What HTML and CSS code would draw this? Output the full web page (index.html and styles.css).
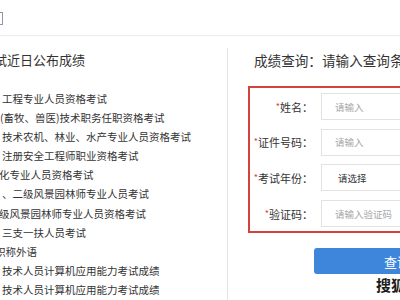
FILE: index.html
```html
<!DOCTYPE html>
<html lang="zh-CN">

<head>
    <meta http-equiv="Content-Type" content="text/html; charset=UTF-8" />
    <title>成绩查询</title>
    <link rel="stylesheet" href="styles.css">
</head>

<body>
    <div class="topBar">
        <span class="topIcon"></span>
    </div>

    <div class="main">
        <div class="newsColumn">
            <div class="sectionTitle cutTitle">试近日公布成绩</div>
            <ul class="newsList">
                <li>工程专业人员资格考试</li>
                <li class="cutLeft">(畜牧、兽医)技术职务任职资格考试</li>
                <li>技术农机、林业、水产专业人员资格考试</li>
                <li>注册安全工程师职业资格考试</li>
                <li class="cutSmall">化专业人员资格考试</li>
                <li>、二级风景园林师专业人员考试</li>
                <li class="cutSmall">级风景园林师专业人员资格考试</li>
                <li>三支一扶人员考试</li>
                <li class="cutHalf">职称外语</li>
                <li>技术人员计算机应用能力考试成绩</li>
                <li>技术人员计算机应用能力考试成绩</li>
            </ul>
        </div>

        <div class="queryColumn">
            <div class="sectionTitle queryTitle">成绩查询：请输入查询条件</div>

            <div class="queryBox">
                <label class="fieldLabel" for="name"><span class="required">*</span>姓名：</label>
                <input class="fieldInput" id="name" type="text" placeholder="请输入" />

                <label class="fieldLabel" for="idcard"><span class="required">*</span>证件号码：</label>
                <input class="fieldInput" id="idcard" type="text" placeholder="请输入" />

                <label class="fieldLabel" for="year"><span class="required">*</span>考试年份：</label>
                <div class="fieldInput fieldSelect" id="year">请选择</div>

                <label class="fieldLabel" for="code"><span class="required">*</span>验证码：</label>
                <input class="fieldInput" id="code" type="text" placeholder="请输入验证码" />
            </div>

            <button class="queryButton">查询</button>
        </div>
    </div>

    <div class="watermark">搜狐号</div>
</body>

</html>
```

FILE: styles.css
```css
html, body {
    margin: 0;
    padding: 0;
    overflow: hidden;
}

body {
    width: 400px;
    height: 300px;
    background: #ffffff;
    color: #333333;
    font-family: "Noto Sans CJK SC", "Noto Sans", sans-serif;
}

/* header strip */
.topBar {
    height: 35px;
    display: flex;
    align-items: center;
    border-bottom: 1px solid #ececec;
}
.topIcon {
    display: block;
    width: 6px;
    height: 11px;
    margin-left: -5px;
    margin-top: 2px;
    border: 1px solid #8a98aa;
}

.main {
    display: flex;
    padding-top: 12px;
}

.sectionTitle {
    font-size: 13px;
    line-height: 24px;
    white-space: nowrap;
    color: #333333;
}

/* left column: recent results */
.newsColumn {
    width: 227px;
    flex: none;
    overflow: hidden;
    border-right: 1px solid #e6e6e6;
    height: 260px;
}
.cutTitle {
    text-indent: -6px;
}
.newsList {
    list-style: none;
    margin: 17px 0 0 0;
    padding: 0;
    font-size: 10.5px;
    line-height: 19.1px;
    color: #333333;
    white-space: nowrap;
}
.newsList li {
    padding-left: 2px;
}
.newsList .cutLeft {
    padding-left: 0;
}
.newsList .cutSmall {
    padding-left: 0;
    text-indent: -1px;
}
.newsList .cutHalf {
    padding-left: 0;
    text-indent: -5px;
}

/* right column: query form */
.queryColumn {
    flex: none;
    width: 300px;
}
.queryTitle {
    padding-left: 26px;
    font-size: 13.6px;
}

.queryBox {
    width: 260px;
    margin: 14px 0 0 20px;
    border: 2px solid #d4433b;
    padding: 5px 0 4px 0;
    display: grid;
    grid-template-columns: 63px 1fr;
    column-gap: 8px;
    row-gap: 8.7px;
    align-items: center;
}
.fieldLabel {
    font-size: 11px;
    text-align: right;
    white-space: nowrap;
    color: #333333;
}
.required {
    color: #d4433b;
    font-size: 9px;
    vertical-align: 2px;
}
.fieldInput {
    box-sizing: border-box;
    height: 27px;
    width: 100%;
    margin: 0;
    border: 1px solid #e2e2e2;
    border-right: none;
    border-radius: 0;
    padding: 0 0 0 13px;
    font-family: inherit;
    font-size: 9.5px;
    color: #333333;
    background: #ffffff;
    outline: none;
}
.fieldInput::placeholder {
    color: #a8a8a8;
}
.fieldSelect {
    display: flex;
    align-items: center;
    padding-left: 16px;
}

.queryButton {
    display: block;
    width: 166px;
    height: 26px;
    margin: 15px 0 0 86px;
    border: none;
    border-radius: 3px;
    background: #3d86dc;
    color: #ffffff;
    font-family: inherit;
    font-size: 13px;
    padding: 0;
}

/* image watermark laid over the page */
.watermark {
    position: absolute;
    left: 376px;
    top: 274px;
    font-size: 15px;
    font-weight: bold;
    color: #1c1c1c;
    white-space: nowrap;
    text-shadow: 0 0 2px #ffffff;
}
```
